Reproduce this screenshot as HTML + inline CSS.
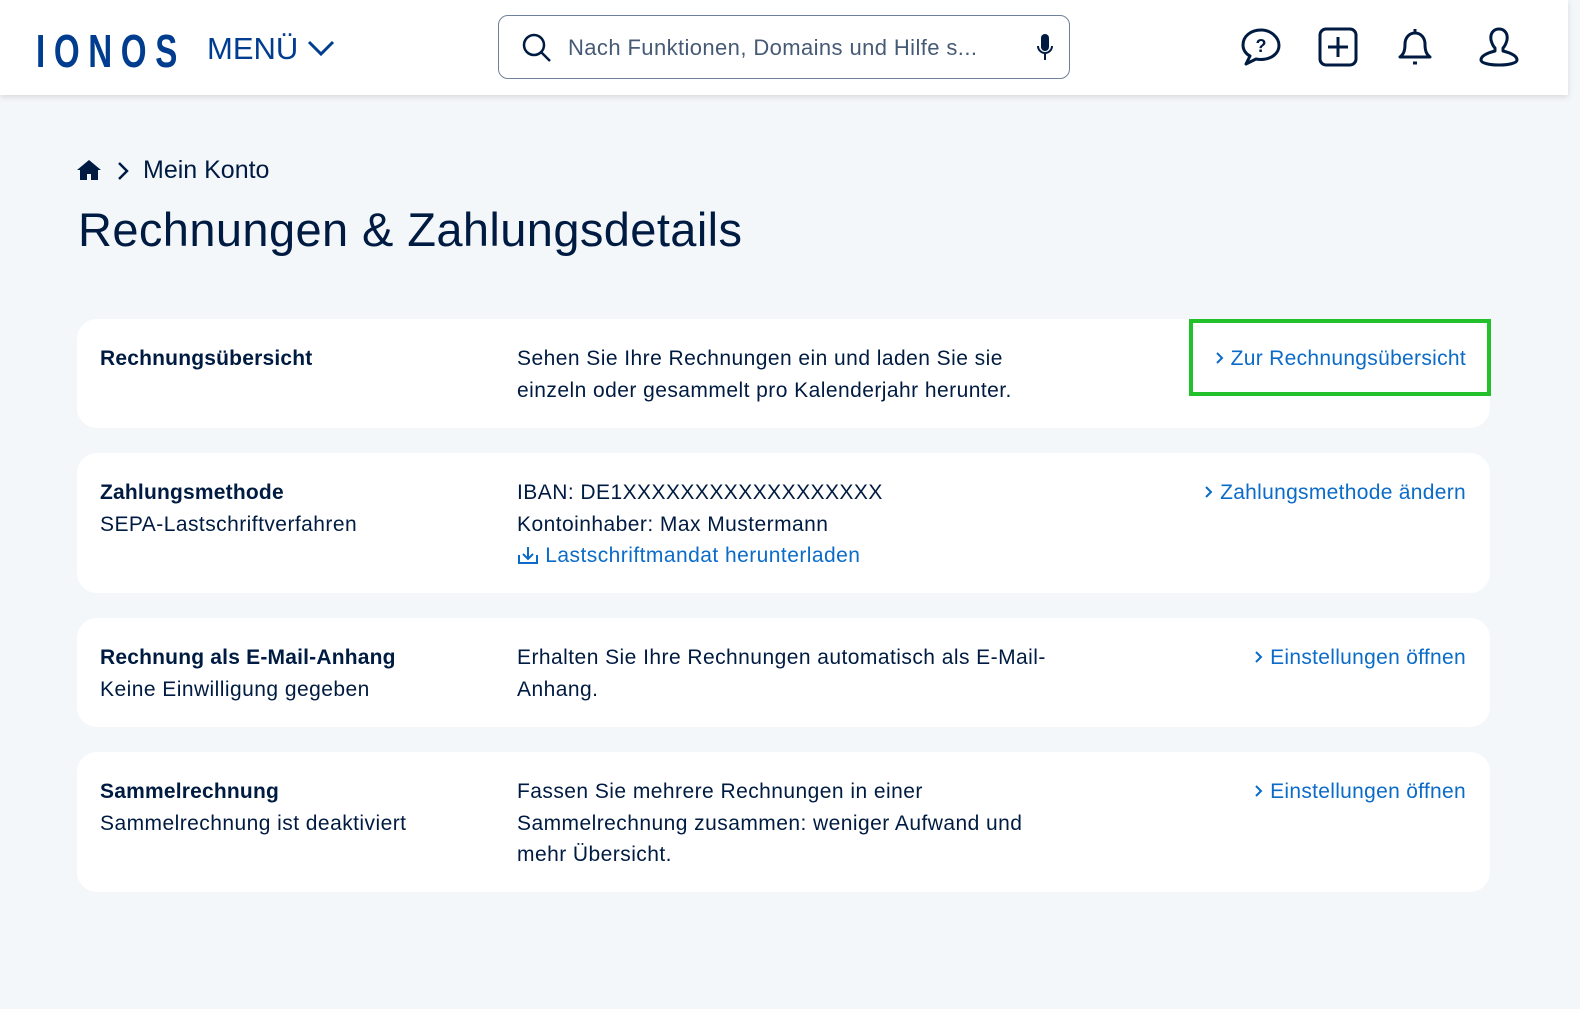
<!DOCTYPE html>
<html><head><meta charset="utf-8"><style>
body{margin:0;width:1580px;height:1009px;background:#f4f7fa;font-family:"Liberation Sans",sans-serif;color:#001b41;overflow:hidden;position:relative}
.hdr{position:absolute;left:0;top:0;width:1568px;height:95px;background:#fff;box-shadow:0 2px 6px rgba(0,0,0,.12)}
.logo{position:absolute;left:36px;top:24px;font-size:46px;font-weight:bold;color:#003d8f;letter-spacing:12px;transform:scaleX(.72);transform-origin:left}
.menu{position:absolute;left:207px;top:31px;font-size:31px;color:#003d8f}
.search{position:absolute;left:498px;top:15px;width:572px;height:64px;border:1px solid #71809a;border-radius:10px;box-sizing:border-box}
.search span{position:absolute;left:69px;top:19px;font-size:22px;color:#465a75;letter-spacing:.4px}
.ic{position:absolute;top:26px}
.crumb{position:absolute;left:143px;top:156px;font-size:25px}
h1{position:absolute;left:78px;top:202px;margin:0;font-size:47px;font-weight:normal;letter-spacing:.4px}
.card{position:absolute;left:77px;width:1413px;background:#fff;border-radius:20px}
.card div{font-size:21px;line-height:31.5px;letter-spacing:.45px}
.card .t{position:absolute;left:23px;top:24px}
.card .t b{font-weight:bold;letter-spacing:.2px}
.card .d{position:absolute;left:440px;top:24px}
.card .l{position:absolute;right:24px;top:24px;color:#0b6bc8;letter-spacing:.3px}
.l svg{vertical-align:0;margin-right:6px}
a{color:#0b6bc8;text-decoration:none}
.green{position:absolute;left:1189px;top:319px;width:302px;height:77px;border:4px solid #22c02a;box-sizing:border-box}
</style></head><body>
<div class="hdr">
<div class="logo">IONOS</div>
<div class="menu">MENÜ <svg width="28" height="18" viewBox="0 0 28 18" style="vertical-align:2px"><path d="M2 3l12 12L26 3" fill="none" stroke="#003d8f" stroke-width="3"/></svg></div>
<div class="search"><svg style="position:absolute;left:22px;top:16px" width="32" height="32" viewBox="0 0 32 32"><circle cx="13" cy="13" r="10" fill="none" stroke="#001b41" stroke-width="2.5"/><path d="M20 20l9 9" stroke="#001b41" stroke-width="2.5"/></svg><span>Nach Funktionen, Domains und Hilfe s...</span><svg style="position:absolute;left:536px;top:16px" width="20" height="32" viewBox="0 0 20 32"><rect x="6" y="2" width="8" height="17" rx="4" fill="#001b41"/><path d="M3 14a7 7 0 0 0 14 0M10 21v7" fill="none" stroke="#001b41" stroke-width="2"/></svg></div>
<svg class="ic" style="left:1240px" width="42" height="42" viewBox="0 0 42 42"><path d="M21 4C11 4 3 10 3 19c0 5 3 9 7 11l-4 8 10-5c2 .5 3 .5 5 .5 10 0 18-6 18-14S31 4 21 4z" fill="none" stroke="#001b41" stroke-width="3" stroke-linejoin="round"/><text x="21" y="26" font-size="18" font-weight="bold" text-anchor="middle" fill="#001b41">?</text></svg>
<svg class="ic" style="left:1317px" width="42" height="42" viewBox="0 0 42 42"><rect x="3" y="3" width="36" height="36" rx="6" fill="none" stroke="#001b41" stroke-width="3"/><path d="M21 11v20M11 21h20" stroke="#001b41" stroke-width="3"/></svg>
<svg class="ic" style="left:1394px" width="42" height="42" viewBox="0 0 42 42"><path d="M21 3v3M6 31h30c-4-3-5-7-5-13 0-6-4-11-10-11S11 12 11 18c0 6-1 10-5 13zM19 37h4" fill="none" stroke="#001b41" stroke-width="3" stroke-linejoin="round"/></svg>
<svg class="ic" style="left:1478px" width="42" height="42" viewBox="0 0 42 42"><path d="M21 3c-6 0-9 5-8 11 1 4 3 7 4 8v3c-8 2-14 5-14 9 0 3 8 5 18 5s18-2 18-5c0-4-6-7-14-9v-3c1-1 3-4 4-8 1-6-2-11-8-11z" fill="none" stroke="#001b41" stroke-width="3" stroke-linejoin="round"/></svg>
</div>
<svg style="position:absolute;left:77px;top:159px" width="24" height="22" viewBox="0 0 24 22"><path d="M12 1L0 11h3v10h7v-6h4v6h7V11h3z" fill="#001b41"/></svg>
<svg style="position:absolute;left:116px;top:161px" width="14" height="20" viewBox="0 0 14 20"><path d="M3 2l8 8-8 8" fill="none" stroke="#001b41" stroke-width="2.5"/></svg>
<div class="crumb">Mein Konto</div>
<h1>Rechnungen &amp; Zahlungsdetails</h1>
<div class="card" style="top:319px;height:109px"><div class="t"><b>Rechnungsübersicht</b></div><div class="d">Sehen Sie Ihre Rechnungen ein und laden Sie sie<br>einzeln oder gesammelt pro Kalenderjahr herunter.</div><div class="l"><svg width="10" height="14" viewBox="0 0 10 14"><path d="M2 2l5 5-5 5" fill="none" stroke="#0b6bc8" stroke-width="2"/></svg>Zur Rechnungsübersicht</div></div>
<div class="green"></div>
<div class="card" style="top:453px;height:140px"><div class="t"><b>Zahlungsmethode</b><br>SEPA-Lastschriftverfahren</div><div class="d">IBAN: DE1XXXXXXXXXXXXXXXXXX<br>Kontoinhaber: Max Mustermann<br><a><svg width="22" height="20" viewBox="0 0 22 20" style="vertical-align:-3px"><path d="M2 10v8h18v-8M11 2v12M6 9l5 5 5-5" fill="none" stroke="#0b6bc8" stroke-width="2"/></svg> Lastschriftmandat herunterladen</a></div><div class="l"><svg width="10" height="14" viewBox="0 0 10 14"><path d="M2 2l5 5-5 5" fill="none" stroke="#0b6bc8" stroke-width="2"/></svg>Zahlungsmethode ändern</div></div>
<div class="card" style="top:618px;height:109px"><div class="t"><b>Rechnung als E-Mail-Anhang</b><br>Keine Einwilligung gegeben</div><div class="d">Erhalten Sie Ihre Rechnungen automatisch als E-Mail-<br>Anhang.</div><div class="l"><svg width="10" height="14" viewBox="0 0 10 14"><path d="M2 2l5 5-5 5" fill="none" stroke="#0b6bc8" stroke-width="2"/></svg>Einstellungen öffnen</div></div>
<div class="card" style="top:752px;height:140px"><div class="t"><b>Sammelrechnung</b><br>Sammelrechnung ist deaktiviert</div><div class="d">Fassen Sie mehrere Rechnungen in einer<br>Sammelrechnung zusammen: weniger Aufwand und<br>mehr Übersicht.</div><div class="l"><svg width="10" height="14" viewBox="0 0 10 14"><path d="M2 2l5 5-5 5" fill="none" stroke="#0b6bc8" stroke-width="2"/></svg>Einstellungen öffnen</div></div>
</body></html>
